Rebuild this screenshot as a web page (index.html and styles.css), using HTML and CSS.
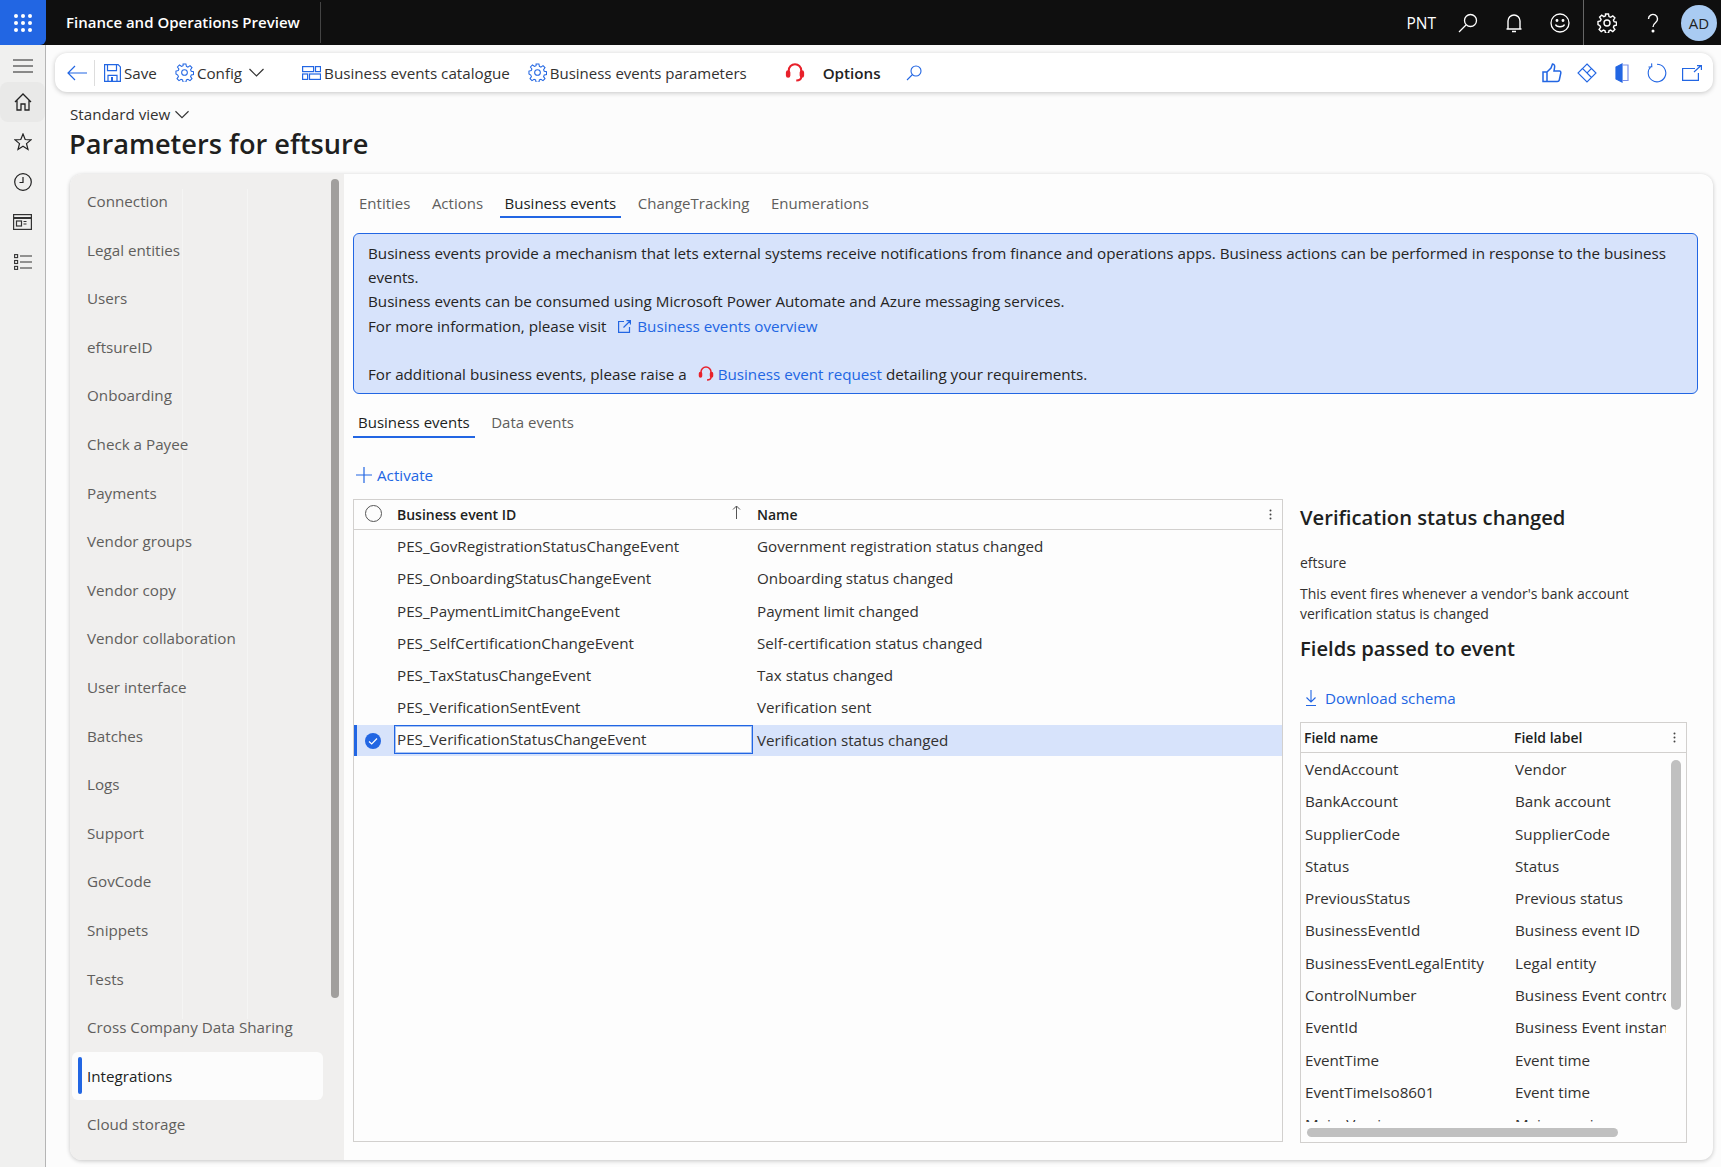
FILE: index.html
```html
<!DOCTYPE html>
<html lang="en">
<head>
    <meta charset="UTF-8">
    <title>Parameters for eftsure</title>
    <link rel="stylesheet" href="styles.css">
</head>
<body>
    <header class="topbar">
        <div class="waffle">
            <svg width="20" height="20" viewBox="0 0 20 20" fill="#fff"><circle cx="3" cy="3" r="2"/><circle cx="10" cy="3" r="2"/><circle cx="17" cy="3" r="2"/><circle cx="3" cy="10" r="2"/><circle cx="10" cy="10" r="2"/><circle cx="17" cy="10" r="2"/><circle cx="3" cy="17" r="2"/><circle cx="10" cy="17" r="2"/><circle cx="17" cy="17" r="2"/></svg>
        </div>
        <div class="app-name">Finance and Operations Preview</div>
        <div class="top-right">
            <span class="company">PNT</span>
            <svg class="top-icon" width="20" height="20" viewBox="0 0 20 20" fill="none" stroke="#fff" stroke-width="1.3"><circle cx="12.5" cy="7.5" r="6"/><path d="M8 12L1 19"/></svg>
            <svg class="top-icon" width="20" height="20" viewBox="0 0 20 20" fill="none" stroke="#fff" stroke-width="1.4"><path d="M4 16V8a6 6 0 0 1 12 0v8M2.5 16h15M8 18.5h4"/></svg>
            <svg class="top-icon" width="20" height="20" viewBox="0 0 20 20" fill="none" stroke="#fff" stroke-width="1.3"><circle cx="10" cy="10" r="9"/><path d="M5.5 11.5c1 3 8 3 9 0"/><circle cx="7" cy="7.5" r=".8" fill="#fff"/><circle cx="13" cy="7.5" r=".8" fill="#fff"/></svg>
            <span class="top-divider"></span>
            <svg class="top-icon" width="20" height="20" viewBox="0 0 20 20" fill="none" stroke="#fff" stroke-width="1.4"><circle cx="10" cy="10" r="3"/><path d="M8.5 1h3l.5 2.6 1.6.7 2.2-1.5 2.1 2.1-1.5 2.2.7 1.6 2.4.5v3l-2.4.5-.7 1.6 1.5 2.2-2.1 2.1-2.2-1.5-1.6.7-.5 2.4h-3l-.5-2.4-1.6-.7-2.2 1.5-2.1-2.1 1.5-2.2-.7-1.6L1 11.5v-3l2.4-.5.7-1.6-1.5-2.2 2.1-2.1 2.2 1.5 1.6-.7z"/></svg>
            <svg class="top-icon" width="20" height="20" viewBox="0 0 20 20" fill="none" stroke="#fff" stroke-width="1.4"><path d="M5.5 6a4.5 4.5 0 1 1 7 3.7C11 10.8 10 11.5 10 14"/><circle cx="10" cy="18" r=".8" fill="#fff"/></svg>
            <span class="avatar">AD</span>
        </div>
    </header>

    <div class="shell">
        <nav class="rail">
            <svg class="rail-icon menu-icon" width="20" height="14" viewBox="0 0 20 14" stroke="#222" stroke-width="1"><path d="M0 1h20M0 7h20M0 13h20"/></svg>
            <div class="rail-item active">
                <svg width="18" height="18" viewBox="0 0 18 18" fill="none" stroke="#222" stroke-width="1.3"><path d="M1 9l8-8 8 8M3 7.5V17h4v-6h4v6h4V7.5"/></svg>
            </div>
            <div class="rail-item">
                <svg width="18" height="18" viewBox="0 0 18 18" fill="none" stroke="#222" stroke-width="1.2"><path d="M9 1l2.2 5.5 5.8.4-4.5 3.7 1.5 5.900L9 13.300l-5 3.200 1.500-5.900L1 6.900l5.800-.4z"/></svg>
            </div>
            <div class="rail-item">
                <svg width="18" height="18" viewBox="0 0 18 18" fill="none" stroke="#222" stroke-width="1.2"><circle cx="9" cy="9" r="8.300"/><path d="M9 4v5.500H5.500"/></svg>
            </div>
            <div class="rail-item">
                <svg width="19" height="16" viewBox="0 0 19 16" fill="none" stroke="#333" stroke-width="1.2"><rect x=".6" y=".6" width="17.800" height="14.800"/><path d="M.6 4h17.800" stroke-width="2"/><rect x="3.500" y="7" width="5" height="5"/><path d="M10.500 7.500h3M10.500 10h3"/></svg>
            </div>
            <div class="rail-item">
                <svg width="18" height="16" viewBox="0 0 18 16" fill="none" stroke="#333" stroke-width="1.1"><rect x=".6" y=".6" width="3" height="3"/><rect x=".6" y="6.500" width="3" height="3"/><rect x=".6" y="12.400" width="3" height="3"/><path d="M6 2h12M6 8h12M6 14h12"/></svg>
            </div>
        </nav>

        <div class="content">
            <div class="actionbar">
                <svg class="back-icon" width="20" height="16" viewBox="0 0 20 16" fill="none" stroke="#2266e3" stroke-width="1.2"><path d="M8 1L1 8l7 7M1 8h19"/></svg>
                <span class="bar-sep"></span>
                <button class="cmd save-cmd">
                    <svg width="17" height="18" viewBox="0 0 17 18" fill="none" stroke="#2266e3" stroke-width="1.2"><path d="M.6.6h13.500l2.300 2.300v14.500H.6z"/><path d="M3.500.6v6h9v-6M4 17.400v-6h9v6"/><path d="M8 13v4" stroke-width="2"/></svg>
                    Save
                </button>
                <button class="cmd config-cmd">
                    <svg class="gear" width="19" height="19" viewBox="0 0 20 20" fill="none" stroke="#2266e3" stroke-width="1.1"><circle cx="10" cy="10" r="3"/><path d="M8.5 1h3l.5 2.6 1.6.7 2.2-1.5 2.1 2.1-1.5 2.2.7 1.6 2.4.5v3l-2.4.5-.7 1.6 1.5 2.2-2.1 2.1-2.2-1.5-1.6.7-.5 2.4h-3l-.5-2.4-1.6-.7-2.2 1.5-2.1-2.1 1.5-2.2-.7-1.6L1 11.5v-3l2.4-.5.7-1.6-1.5-2.2 2.1-2.1 2.2 1.5 1.6-.7z"/></svg>
                    Config
                    <svg class="chev" width="15" height="9" viewBox="0 0 15 9" fill="none" stroke="#333" stroke-width="1.2"><path d="M.5 1l7 7 7-7"/></svg>
                </button>
                <button class="cmd catalogue-cmd">
                    <svg width="19" height="14" viewBox="0 0 19 14" fill="none" stroke="#2266e3" stroke-width="1.2"><rect x=".6" y=".6" width="11" height="5"/><rect x="13.500" y=".6" width="5" height="5"/><rect x=".6" y="8" width="5" height="5.400"/><rect x="7.500" y="8" width="11" height="5.400"/></svg>
                    Business events catalogue
                </button>
                <button class="cmd params-cmd">
                    <svg class="gear" width="19" height="19" viewBox="0 0 20 20" fill="none" stroke="#2266e3" stroke-width="1.1"><circle cx="10" cy="10" r="3"/><path d="M8.5 1h3l.5 2.6 1.6.7 2.2-1.5 2.1 2.1-1.5 2.2.7 1.6 2.4.5v3l-2.4.5-.7 1.6 1.5 2.2-2.1 2.1-2.2-1.5-1.6.7-.5 2.4h-3l-.5-2.4-1.6-.7-2.2 1.5-2.1-2.1 1.5-2.2-.7-1.6L1 11.5v-3l2.4-.5.7-1.6-1.5-2.2 2.1-2.1 2.2 1.5 1.6-.7z"/></svg>
                    Business events parameters
                </button>
                <svg class="headset" width="20" height="20" viewBox="0 0 16 16" fill="none" stroke="#e8212b" stroke-width="1.6"><path d="M3 7V6a5 5 0 0 1 10 0v1"/><rect x="1.500" y="6.500" width="2" height="4.500" rx="1" fill="#e8212b"/><rect x="12.500" y="6.500" width="2" height="4.500" rx="1" fill="#e8212b"/><path d="M13 11c0 2-1.500 3-4 3"/></svg>
                <span class="options">Options</span>
                <svg class="find-icon" width="16" height="16" viewBox="0 0 16 16" fill="none" stroke="#2266e3" stroke-width="1.1"><circle cx="10" cy="6" r="5"/><path d="M6.500 9.500L1 15"/></svg>
                <div class="bar-right">
                    <svg width="20" height="20" viewBox="0 0 20 20" fill="none" stroke="#2266e3" stroke-width="1.5"><path d="M1 9h4v9.500H1zM5 9l4-4 1.500-4c2 0 2.500 2 2 4L12 8h5.500c1 0 1.500 1 1.300 2l-1.500 7c-.2 1-1 1.500-2 1.500H5"/></svg>
                    <svg width="20" height="20" viewBox="0 0 20 20" fill="none" stroke="#2266e3" stroke-width="1.1"><path d="M10 1l4.500 4.500L10 10 5.500 5.500zM14.500 5.500L19 10l-9 9-9-9 4.500-4.500M10 10l4.500 4.500"/></svg>
                    <svg width="20" height="20" viewBox="-3 0 20 20" fill="none" stroke="#2266e3" stroke-width="1.2"><path d="M7 1L1 4v12l6 3z" fill="#2266e3"/><path d="M7 2h6v15.500H7" stroke="#7a8fe8"/></svg>
                    <svg width="20" height="20" viewBox="0 0 20 20" fill="none" stroke="#2266e3" stroke-width="1.1"><path d="M10 1.200A8.800 8.800 0 1 1 4.300 3.300M4.600 .4l.2 3.400-3.300.2"/></svg>
                    <svg width="20" height="16" viewBox="0 0 20 16" fill="none" stroke="#2266e3" stroke-width="1.2"><path d="M13 3.500H.6v11.900h15.800V8M12 7l7-6.500M15 .6h4.400V5"/></svg>
                </div>
            </div>

            <div class="view-select">Standard view
                <svg width="14" height="9" viewBox="0 0 15 9" fill="none" stroke="#333" stroke-width="1.2"><path d="M.5 1l7 7 7-7"/></svg>
            </div>
            <h1>Parameters for eftsure</h1>

            <div class="card">
                <aside class="sidenav">
                    <div class="nav-item">Connection</div>
                    <div class="nav-item">Legal entities</div>
                    <div class="nav-item">Users</div>
                    <div class="nav-item">eftsureID</div>
                    <div class="nav-item">Onboarding</div>
                    <div class="nav-item">Check a Payee</div>
                    <div class="nav-item">Payments</div>
                    <div class="nav-item">Vendor groups</div>
                    <div class="nav-item">Vendor copy</div>
                    <div class="nav-item">Vendor collaboration</div>
                    <div class="nav-item">User interface</div>
                    <div class="nav-item">Batches</div>
                    <div class="nav-item">Logs</div>
                    <div class="nav-item">Support</div>
                    <div class="nav-item">GovCode</div>
                    <div class="nav-item">Snippets</div>
                    <div class="nav-item">Tests</div>
                    <div class="nav-item">Cross Company Data Sharing</div>
                    <div class="nav-item selected">Integrations</div>
                    <div class="nav-item">Cloud storage</div>
                    <span class="nav-scroll"></span>
                </aside>

                <main class="panel">
                    <div class="tabs main-tabs">
                        <span class="tab">Entities</span>
                        <span class="tab">Actions</span>
                        <span class="tab current">Business events</span>
                        <span class="tab">ChangeTracking</span>
                        <span class="tab">Enumerations</span>
                    </div>

                    <div class="infobox">
                        <div>Business events provide a mechanism that lets external systems receive notifications from finance and operations apps. Business actions can be performed in response to the business events.</div>
                        <div>Business events can be consumed using Microsoft Power Automate and Azure messaging services.</div>
                        <div>For more information, please visit
                            <svg class="ext-icon" width="13" height="13" viewBox="0 0 13 13" fill="none" stroke="#2266e3" stroke-width="1.2"><path d="M6 1.500H.6v10.900h10.900V7M5.500 7.500L12 1M8.500.6h3.900v3.900"/></svg>
                            <a class="link">Business events overview</a></div>
                        <div class="blank"></div>
                        <div>For additional business events, please raise a
                            <svg class="mini-headset" width="16" height="16" viewBox="0 0 16 16" fill="none" stroke="#e8212b" stroke-width="1.5"><path d="M3 7V6a5 5 0 0 1 10 0v1"/><rect x="1.500" y="6.500" width="2" height="4.500" rx="1" fill="#e8212b"/><rect x="12.500" y="6.500" width="2" height="4.500" rx="1" fill="#e8212b"/><path d="M13 11c0 2-1.500 3-4 3"/></svg>
                            <a class="link">Business event request</a> detailing your requirements.</div>
                    </div>

                    <div class="tabs subtabs">
                        <span class="tab current">Business events</span>
                        <span class="tab">Data events</span>
                    </div>

                    <div class="activate">
                        <svg width="16" height="16" viewBox="0 0 16 16" stroke="#2266e3" stroke-width="1.2"><path d="M8 0v16M0 8h16"/></svg>
                        Activate
                    </div>

                    <div class="split">
                        <div class="grid events">
                            <div class="grid-head">
                                <span class="radio"></span>
                                <span class="col-id">Business event ID</span>
                                <svg class="sort" width="9" height="14" viewBox="0 0 9 14" fill="none" stroke="#555" stroke-width="1"><path d="M4.500 14V1M1 4.500L4.500 1 8 4.500"/></svg>
                                <span class="col-name">Name</span>
                                <svg class="dots" width="3" height="11" viewBox="0 0 3 11" fill="#444"><circle cx="1.500" cy="1.500" r="1"/><circle cx="1.500" cy="5.500" r="1"/><circle cx="1.500" cy="9.500" r="1"/></svg>
                            </div>
                            <div class="row"><span class="col-id">PES_GovRegistrationStatusChangeEvent</span><span class="col-name">Government registration status changed</span></div>
                            <div class="row"><span class="col-id">PES_OnboardingStatusChangeEvent</span><span class="col-name">Onboarding status changed</span></div>
                            <div class="row"><span class="col-id">PES_PaymentLimitChangeEvent</span><span class="col-name">Payment limit changed</span></div>
                            <div class="row"><span class="col-id">PES_SelfCertificationChangeEvent</span><span class="col-name">Self-certification status changed</span></div>
                            <div class="row"><span class="col-id">PES_TaxStatusChangeEvent</span><span class="col-name">Tax status changed</span></div>
                            <div class="row"><span class="col-id">PES_VerificationSentEvent</span><span class="col-name">Verification sent</span></div>
                            <div class="row picked">
                                <svg class="check" width="16" height="16" viewBox="0 0 16 16"><circle cx="8" cy="8" r="8" fill="#2266e3"/><path d="M4 8.500l2.700 2.500L12 5.500" fill="none" stroke="#fff" stroke-width="1.200"/></svg>
                                <span class="col-id">PES_VerificationStatusChangeEvent</span><span class="col-name">Verification status changed</span>
                            </div>
                        </div>

                        <section class="details">
                            <h2>Verification status changed</h2>
                            <p class="source">eftsure</p>
                            <p class="desc">This event fires whenever a vendor's bank account verification status is changed</p>
                            <h2 class="fields-title">Fields passed to event</h2>
                            <div class="download">
                                <svg width="12" height="16" viewBox="0 0 12 16" fill="none" stroke="#2266e3" stroke-width="1.100"><path d="M6 0v12M1.500 7.500L6 12l4.500-4.500M1 15.500h10"/></svg>
                                <a class="link">Download schema</a>
                            </div>
                            <div class="grid fields">
                                <div class="grid-head">
                                    <span class="f-name">Field name</span>
                                    <span class="f-label">Field label</span>
                                    <svg class="dots" width="3" height="11" viewBox="0 0 3 11" fill="#444"><circle cx="1.500" cy="1.500" r="1"/><circle cx="1.500" cy="5.500" r="1"/><circle cx="1.500" cy="9.500" r="1"/></svg>
                                </div>
                                <div class="field-rows">
                                    <div class="row"><span class="f-name">VendAccount</span><span class="f-label">Vendor</span></div>
                                    <div class="row"><span class="f-name">BankAccount</span><span class="f-label">Bank account</span></div>
                                    <div class="row"><span class="f-name">SupplierCode</span><span class="f-label">SupplierCode</span></div>
                                    <div class="row"><span class="f-name">Status</span><span class="f-label">Status</span></div>
                                    <div class="row"><span class="f-name">PreviousStatus</span><span class="f-label">Previous status</span></div>
                                    <div class="row"><span class="f-name">BusinessEventId</span><span class="f-label">Business event ID</span></div>
                                    <div class="row"><span class="f-name">BusinessEventLegalEntity</span><span class="f-label">Legal entity</span></div>
                                    <div class="row"><span class="f-name">ControlNumber</span><span class="f-label">Business Event control number</span></div>
                                    <div class="row"><span class="f-name">EventId</span><span class="f-label">Business Event instance ID</span></div>
                                    <div class="row"><span class="f-name">EventTime</span><span class="f-label">Event time</span></div>
                                    <div class="row"><span class="f-name">EventTimeIso8601</span><span class="f-label">Event time</span></div>
                                    <div class="row"><span class="f-name">MajorVersion</span><span class="f-label">Major version</span></div>
                                </div>
                                <span class="v-scroll"></span>
                                <span class="h-scroll"></span>
                            </div>
                        </section>
                    </div>
                </main>
            </div>
        </div>
    </div>
</body>
</html>
```

FILE: styles.css
```css
/* Reset CSS */
* {
    margin: 0;
    padding: 0;
    box-sizing: border-box;
}
html, body {
    height: 1167px;
    overflow: hidden;
}
body {
    font-family: 'Open Sans', 'Noto Sans', sans-serif;
    font-size: 15.2px;
    color: #323130;
    background: #fcfcfc;
}
button {
    font: inherit;
    color: inherit;
    background: none;
    border: none;
}
svg {
    flex: none;
}

/* Top bar */
.topbar {
    height: 45px;
    background: #0f0f0f;
    color: #fff;
    display: flex;
    align-items: center;
}
.waffle {
    width: 46px;
    height: 45px;
    background: #2266e3;
    border-bottom-right-radius: 6px;
    display: flex;
    align-items: center;
    justify-content: center;
}
.app-name {
    width: 275px;
    height: 41px;
    line-height: 41px;
    padding-left: 20px;
    font-size: 15px;
    font-weight: 600;
    border-right: 1px solid #444;
}
.top-right {
    margin-left: auto;
    height: 45px;
    display: flex;
    align-items: center;
}
.company {
    margin-right: 22px;
    font-size: 15.5px;
}
.top-icon {
    margin-right: 26px;
}
.top-divider {
    width: 1px;
    height: 45px;
    background: #666;
    margin: 0 13px 0 -13px;
}
.avatar {
    width: 36px;
    height: 36px;
    margin: 0 4px 0 -8px;
    border-radius: 50%;
    background: #a9cbf2;
    color: #222;
    font-size: 15px;
    display: flex;
    align-items: center;
    justify-content: center;
}

/* Left rail */
.shell {
    display: flex;
    height: 1122px;
}
.rail {
    width: 46px;
    background: #f0f0ef;
    border-right: 1px solid #b5b5b5;
    display: flex;
    flex-direction: column;
    align-items: center;
}
.menu-icon {
    margin: 14px 0 9px;
}
.rail-item {
    width: 45px;
    height: 40px;
    display: flex;
    align-items: center;
    justify-content: center;
}
.rail-item.active {
    background: #e9e9e8;
    border-radius: 8px;
}

/* Action bar */
.content {
    flex: 1;
    padding: 8px 8px 7px 9px;
    display: flex;
    flex-direction: column;
}
.actionbar {
    height: 39px;
    flex: none;
    background: #fff;
    border-radius: 12px;
    box-shadow: 0 1px 5px rgba(0, 0, 0, 0.22);
    display: flex;
    align-items: center;
    padding-left: 12px;
}
.bar-sep {
    width: 1px;
    height: 26px;
    background: #ddd;
    margin: 0 9px 0 7px;
}
.cmd {
    display: flex;
    align-items: center;
    gap: 3px;
    white-space: nowrap;
}
.save-cmd {
    margin-right: 18px;
}
.config-cmd {
    margin-right: 38px;
}
.config-cmd .chev {
    margin-left: 4px;
}
.catalogue-cmd {
    margin-right: 18px;
}
.params-cmd {
    font-size: 15px;
}
.headset {
    margin-left: 38px;
}
.options {
    margin-left: 18px;
    font-weight: 600;
    color: #222;
}
.find-icon {
    margin-left: 25px;
}
.bar-right {
    margin-left: auto;
    margin-right: 11px;
    display: flex;
    align-items: center;
    gap: 15px;
}

/* Page title */
.view-select {
    margin: 12px 0 0 15px;
    height: 20px;
    line-height: 20px;
    display: flex;
    align-items: center;
    gap: 5px;
}
h1 {
    margin: -1px 0 0 14px;
    height: 42px;
    line-height: 42px;
    font-size: 27.2px;
    font-weight: 600;
    color: #201f1e;
}

/* Card */
.card {
    flex: 1;
    min-height: 0;
    margin: 9px 0 0 15px;
    display: flex;
    background: #fdfdfd;
    border-radius: 12px;
    box-shadow: 0 1px 4px rgba(0, 0, 0, 0.22);
    overflow: hidden;
}
.sidenav {
    width: 274px;
    flex: none;
    position: relative;
    padding-top: 3px;
    background-color: #f0efee;
    background-image: linear-gradient(#f5f5f4, #f5f5f4), linear-gradient(#f5f5f4, #f5f5f4);
    background-size: 1px 830px;
    background-position: 112px 15px, 177px 15px;
    background-repeat: no-repeat;
}
.nav-item {
    height: 48.6px;
    line-height: 48.6px;
    margin-left: 2px;
    width: 251px;
    padding-left: 15px;
    color: #605e5c;
    border-radius: 6px;
}
.nav-item.selected {
    background: #fcfcfc;
    color: #201f1e;
    position: relative;
}
.nav-item.selected::before {
    content: "";
    position: absolute;
    left: 6px;
    top: 5px;
    bottom: 6px;
    width: 4px;
    border-radius: 2px;
    background: #2266e3;
}
.nav-scroll {
    position: absolute;
    left: 261px;
    top: 5px;
    width: 8px;
    height: 819px;
    border-radius: 4px;
    background: #a19f9d;
}

/* Main panel */
.panel {
    flex: 1;
    min-width: 0;
    padding: 10px 15px 0 9px;
    display: flex;
    flex-direction: column;
}
.tabs {
    display: flex;
    height: 34px;
    flex: none;
}
.main-tabs {
    padding-left: 1px;
}
.tab {
    height: 34px;
    line-height: 38px;
    padding: 0 5px;
    margin-right: 11.5px;
    font-size: 15px;
    color: #605e5c;
    border-bottom: 2px solid transparent;
}
.tab.current {
    color: #201f1e;
    border-bottom-color: #2266e3;
}
.infobox {
    margin-top: 15px;
    height: 161px;
    flex: none;
    padding: 7px 12px 0 14px;
    line-height: 24.2px;
    color: #252423;
    background: #d7e3fb;
    border: 1px solid #2266e3;
    border-radius: 6px;
}
.blank {
    height: 24px;
}
.link {
    color: #2266e3;
}
.ext-icon {
    margin: 0 2px 0 8px;
    vertical-align: -1px;
}
.mini-headset {
    margin: 0 0 0 7px;
    vertical-align: -2px;
}
.subtabs {
    margin-top: 10px;
}
.subtabs .tab {
    line-height: 37px;
}
.activate {
    margin: 20px 0 0 3px;
    height: 34px;
    flex: none;
    display: flex;
    align-items: center;
    gap: 5px;
    color: #2266e3;
}
.split {
    flex: 1;
    min-height: 0;
    margin-top: 7px;
    margin-bottom: 18px;
    display: flex;
}

/* Grids */
.grid {
    position: relative;
    border: 1px solid #d2d0ce;
    background: #fdfdfd;
}
.events {
    width: 930px;
    flex: none;
}
.grid-head {
    height: 30px;
    position: relative;
    border-bottom: 1px solid #d2d0ce;
    font-size: 14px;
    font-weight: 600;
    color: #201f1e;
    line-height: 29px;
}
.row {
    height: 32.3px;
    line-height: 32.3px;
    position: relative;
    white-space: nowrap;
}
.col-id {
    position: absolute;
    left: 43px;
    color: #323130;
}
.grid-head .col-id,
.grid-head .col-name {
    color: #201f1e;
}
.col-name {
    position: absolute;
    left: 403px;
}
.radio {
    position: absolute;
    left: 11px;
    top: 5px;
    width: 17px;
    height: 17px;
    border: 1px solid #555;
    border-radius: 50%;
}
.sort {
    position: absolute;
    left: 378px;
    top: 5px;
}
.grid-head .dots {
    position: absolute;
    right: 10px;
    top: 9px;
}
.row.picked {
    margin-top: 1.5px;
    height: 31px;
    line-height: 30px;
    background: #d7e3fb;
    border-left: 3px solid #2266e3;
}
.row.picked .col-id {
    left: 37px;
    width: 359px;
    height: 29px;
    line-height: 27px;
    padding-left: 2px;
    background: #fdfdfd;
    border: 1px solid #2266e3;
    box-shadow: 0 0 0 1px #a9c4f3 inset;
}
.row.picked .col-name {
    left: 400px;
}
.check {
    position: absolute;
    left: 8px;
    top: 8px;
}

/* Details side */
.details {
    flex: 1;
    min-width: 0;
    padding-left: 17px;
}
h2 {
    margin-top: 2px;
    height: 32px;
    line-height: 32px;
    font-size: 20.2px;
    font-weight: 600;
    color: #201f1e;
}
.source {
    margin-top: 20px;
    height: 20px;
    line-height: 20px;
    font-size: 14px;
    color: #323130;
}
.desc {
    margin-top: 11px;
    width: 390px;
    font-size: 14px;
    line-height: 20px;
}
.fields-title {
    margin-top: 8px;
}
.download {
    margin: 22px 0 0 5px;
    height: 24px;
    display: flex;
    align-items: center;
    gap: 8px;
}
.fields {
    margin-top: 12px;
    width: 387px;
    height: 421px;
    overflow: hidden;
}
.f-name {
    position: absolute;
    left: 4px;
}
.f-label {
    position: absolute;
    left: 214px;
    width: 151px;
    overflow: hidden;
}
.grid-head .f-name {
    left: 3px;
}
.grid-head .f-label {
    left: 213px;
}
.field-rows {
    height: 369px;
    overflow: hidden;
    width: 365px;
}
.v-scroll {
    position: absolute;
    right: 5px;
    top: 37px;
    width: 10px;
    height: 250px;
    border-radius: 5px;
    background: #c0c0c0;
}
.h-scroll {
    position: absolute;
    left: 6px;
    bottom: 5px;
    width: 311px;
    height: 9px;
    border-radius: 5px;
    background: #c0c0c0;
}
```
